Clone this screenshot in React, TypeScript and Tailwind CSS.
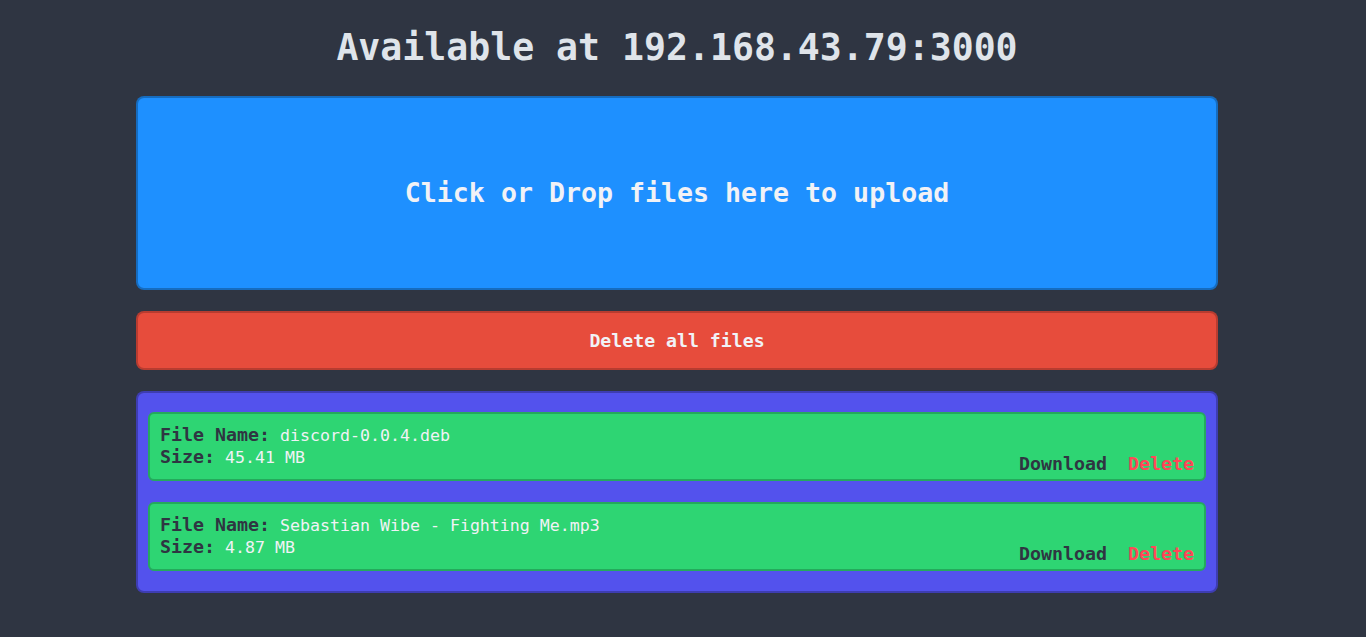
import React from "react";

const files = [
  { name: "discord-0.0.4.deb", size: "45.41 MB" },
  { name: "Sebastian Wibe - Fighting Me.mp3", size: "4.87 MB" },
];

const FileRow = ({ name, size }: { name: string; size: string }) => (
  <div className="flex h-[69px] justify-between rounded-md border-2 border-black/20 bg-[#2ed573] px-[10px] pt-[10px] pb-[3px]">
    <div className="leading-[21px]">
      <div>
        <span className="text-[18.3px] font-bold text-[#2f3542]">File Name:</span>
        <span className="text-[16.6px] text-[#f1f2f6]"> {name}</span>
      </div>
      <div>
        <span className="text-[18.3px] font-bold text-[#2f3542]">Size:</span>
        <span className="text-[16.6px] text-[#f1f2f6]"> {size}</span>
      </div>
    </div>
    <div className="flex items-end text-[18.3px] font-bold leading-[24px]">
      <span className="cursor-pointer text-[#2f3542]">Download</span>
      <span className="ml-[21px] cursor-pointer text-[#ff4757]">Delete</span>
    </div>
  </div>
);

export default function App() {
  return (
    <div className="min-h-screen bg-[#2f3542] pt-[24px] font-['DejaVu_Sans_Mono',monospace]">
      <div className="w-[1354px] pb-10">
        <h1 className="text-center text-[36.5px] font-bold leading-[48px] text-[#dfe4ea]">
          Available at 192.168.43.79:3000
        </h1>
        <div className="mx-auto mt-[24px] w-[1082px]">
          <div className="flex h-[194px] cursor-pointer items-center justify-center rounded-lg border-2 border-black/25 bg-[#1e90ff] text-[26.6px] font-bold text-[#f1f2f6]">
            Click or Drop files here to upload
          </div>
          <div className="mt-[21px] flex h-[59px] cursor-pointer items-center justify-center rounded-lg border-2 border-black/20 bg-[#e74c3c] text-[18.2px] font-bold text-[#f1f2f6]">
            Delete all files
          </div>
          <div className="mt-[21px] flex flex-col gap-[21px] rounded-lg border-2 border-black/25 bg-[#5352ed] px-[10px] pt-[19px] pb-[20px]">
            {files.map((f) => (
              <FileRow key={f.name} name={f.name} size={f.size} />
            ))}
          </div>
        </div>
      </div>
    </div>
  );
}
